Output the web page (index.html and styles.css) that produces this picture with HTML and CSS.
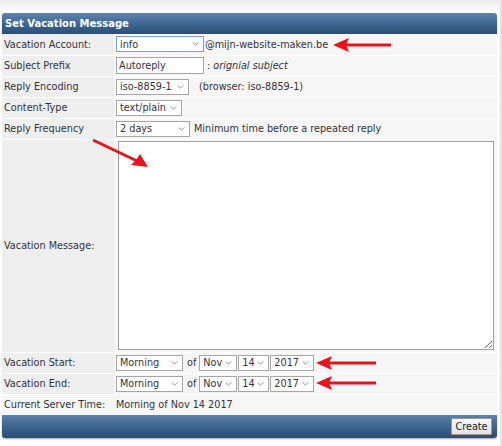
FILE: index.html
```html
<!DOCTYPE html>
<html lang="en">
  <head>
    <meta charset="UTF-8" />
    <title>Set Vacation Message</title>
    <link rel="stylesheet" href="styles.css">
  </head>
  <body>
    <div class="page">
      <div class="top-strip"></div>

      <div class="panel">
        <div class="panel-head">Set Vacation Message</div>

        <table class="form">
          <tr class="row">
            <td class="label">Vacation Account:</td>
            <td class="value">
              <span class="sel sel-focus w-account"><select><option>info</option></select><svg class="chev" viewBox="0 0 8 5"><path d="M0.5 0.5 L4 4 L7.5 0.5" /></svg></span><span class="after-tight">@mijn-website-maken.be</span>
            </td>
          </tr>
          <tr class="row">
            <td class="label">Subject Prefix</td>
            <td class="value">
              <input class="text-input" type="text" value="Autoreply"><span class="hint">: <em>orignial subject</em></span>
            </td>
          </tr>
          <tr class="row">
            <td class="label">Reply Encoding</td>
            <td class="value">
              <span class="sel w-encoding"><select><option>iso-8859-1</option></select><svg class="chev" viewBox="0 0 8 5"><path d="M0.5 0.5 L4 4 L7.5 0.5" /></svg></span><span class="after-wide">(browser: iso-8859-1)</span>
            </td>
          </tr>
          <tr class="row">
            <td class="label">Content-Type</td>
            <td class="value">
              <span class="sel w-type"><select><option>text/plain</option></select><svg class="chev" viewBox="0 0 8 5"><path d="M0.5 0.5 L4 4 L7.5 0.5" /></svg></span>
            </td>
          </tr>
          <tr class="row">
            <td class="label">Reply Frequency</td>
            <td class="value">
              <span class="sel w-freq"><select><option>2 days</option></select><svg class="chev" viewBox="0 0 8 5"><path d="M0.5 0.5 L4 4 L7.5 0.5" /></svg></span><span class="after">Minimum time before a repeated reply</span>
            </td>
          </tr>
          <tr class="row row-message">
            <td class="label">Vacation Message:</td>
            <td class="value">
              <textarea class="message"></textarea>
            </td>
          </tr>
          <tr class="row">
            <td class="label">Vacation Start:</td>
            <td class="value">
              <div class="date-line">
                <span class="sel w-part"><select><option>Morning</option></select><svg class="chev" viewBox="0 0 8 5"><path d="M0.5 0.5 L4 4 L7.5 0.5" /></svg></span>
                <span class="of">of</span>
                <span class="sel w-month"><select><option>Nov</option></select><svg class="chev" viewBox="0 0 8 5"><path d="M0.5 0.5 L4 4 L7.5 0.5" /></svg></span>
                <span class="sel w-day"><select><option>14</option></select><svg class="chev" viewBox="0 0 8 5"><path d="M0.5 0.5 L4 4 L7.5 0.5" /></svg></span>
                <span class="sel w-year"><select><option>2017</option></select><svg class="chev" viewBox="0 0 8 5"><path d="M0.5 0.5 L4 4 L7.5 0.5" /></svg></span>
              </div>
            </td>
          </tr>
          <tr class="row">
            <td class="label">Vacation End:</td>
            <td class="value">
              <div class="date-line">
                <span class="sel w-part"><select><option>Morning</option></select><svg class="chev" viewBox="0 0 8 5"><path d="M0.5 0.5 L4 4 L7.5 0.5" /></svg></span>
                <span class="of">of</span>
                <span class="sel w-month"><select><option>Nov</option></select><svg class="chev" viewBox="0 0 8 5"><path d="M0.5 0.5 L4 4 L7.5 0.5" /></svg></span>
                <span class="sel w-day"><select><option>14</option></select><svg class="chev" viewBox="0 0 8 5"><path d="M0.5 0.5 L4 4 L7.5 0.5" /></svg></span>
                <span class="sel w-year"><select><option>2017</option></select><svg class="chev" viewBox="0 0 8 5"><path d="M0.5 0.5 L4 4 L7.5 0.5" /></svg></span>
              </div>
            </td>
          </tr>
          <tr class="row row-plain">
            <td class="label">Current Server Time:</td>
            <td class="value">Morning of Nov 14 2017</td>
          </tr>
        </table>

        <div class="panel-foot">
          <button class="create-btn">Create</button>
        </div>
      </div>

      <!-- red annotation arrows drawn on top of the form -->
      <svg class="arrows" viewBox="0 0 502 446">
        <g fill="#e8141b" stroke="#e8141b">
          <line x1="391" y1="45" x2="344" y2="45" stroke-width="3" />
          <polygon points="333,45 349,38 346,45 349,52" stroke="none" />

          <line x1="93" y1="140" x2="137" y2="161" stroke-width="3" />
          <polygon points="148,167 131,165 136,160 140,154" stroke="none" />

          <line x1="376" y1="363" x2="327" y2="363" stroke-width="3" />
          <polygon points="316,363 332,356 329,363 332,370" stroke="none" />

          <line x1="376" y1="383" x2="327" y2="383" stroke-width="3" />
          <polygon points="316,383 332,376 329,383 332,390" stroke="none" />
        </g>
      </svg>
    </div>
  </body>
</html>
```

FILE: styles.css
```css
* {
  margin: 0;
  padding: 0;
  box-sizing: border-box;
}

body {
  font-family: "DejaVu Sans", Verdana, sans-serif;
  font-size: 9.7px;
  color: #33333d;
  background-color: #ffffff;
}

.page {
  width: 502px;
  height: 446px;
  position: relative;
  border-right: 2px solid #e4e4e4;
}

.top-strip {
  height: 13px;
  background: linear-gradient(#e9e9e9, #f6f6f6 55%, #ffffff);
}

.panel {
  width: 495px;
  margin-left: 2px;
}

.panel-head {
  height: 21px;
  line-height: 21px;
  padding-left: 3px;
  color: #ffffff;
  font-weight: bold;
  font-size: 10px;
  border-radius: 3px 3px 0 0;
  background: linear-gradient(#6184ad, #426a95 45%, #2c4e74);
  box-shadow: 0 1px 2px rgba(0, 0, 0, 0.3);
}

.form {
  width: 100%;
  border-collapse: collapse;
}

.row td {
  height: 21px;
  border-bottom: 1px solid #ffffff;
  vertical-align: middle;
}

.row-message td {
  height: 213px;
}

.row-plain td {
  height: 20px;
}

.label {
  width: 112px;
  padding-left: 2px;
  background-color: #eeeeee;
  white-space: nowrap;
}

.value {
  padding-left: 2px;
  background-color: #f6f6f6;
  white-space: nowrap;
}

.row-plain .label,
.row-plain .value {
  background-color: #f6f6f6;
}

.sel {
  display: inline-block;
  position: relative;
  flex: none;
  height: 16px;
  vertical-align: middle;
}

.sel select {
  -webkit-appearance: none;
  appearance: none;
  width: 100%;
  height: 16px;
  padding-left: 3px;
  font-family: inherit;
  font-size: 9.7px;
  color: #33333d;
  background-color: #ffffff;
  border: 1px solid #a6a6a6;
  border-radius: 0;
  outline: none;
}

.sel-focus select {
  border-color: #7aa0d6;
}

.chev {
  position: absolute;
  right: 5px;
  top: 6px;
  width: 7px;
  height: 4px;
  fill: none;
  stroke: #8c8c8c;
  stroke-width: 1.2;
}

.w-account { width: 88px; }
.w-encoding { width: 73px; }
.w-type { width: 66px; }
.w-freq { width: 74px; }
.w-part { width: 67px; }
.w-month { width: 38px; }
.w-day { width: 31px; }
.w-year { width: 44px; }

.after-tight {
  margin-left: 1px;
  vertical-align: middle;
}

.after-wide {
  margin-left: 10px;
  vertical-align: middle;
}

.after {
  margin-left: 4px;
  vertical-align: middle;
}

.text-input {
  width: 88px;
  height: 17px;
  padding-left: 2px;
  font-family: inherit;
  font-size: 9.7px;
  color: #33333d;
  border: 1px solid #a6a6a6;
  vertical-align: middle;
}

.hint {
  margin-left: 3px;
  vertical-align: middle;
}

.message {
  display: block;
  width: 376px;
  height: 209px;
  margin-left: 2px;
  border: 1px solid #a0a0a0;
  background-color: #ffffff;
}

.date-line {
  display: flex;
  align-items: center;
  gap: 1px;
}

.of {
  margin: 0 2px 0 3px;
}

.panel-foot {
  height: 23px;
  display: flex;
  justify-content: flex-end;
  align-items: center;
  padding-right: 5px;
  border-radius: 0 0 3px 3px;
  background: linear-gradient(#5d81aa, #3f6791 45%, #2b4c71);
  box-shadow: 0 1px 2px rgba(0, 0, 0, 0.35);
}

.create-btn {
  width: 41px;
  height: 17px;
  font-family: inherit;
  font-size: 9.7px;
  color: #222222;
  background: linear-gradient(#f8f8f8, #e2e2e2);
  border: 1px solid #9a9a9a;
  border-radius: 1px;
}

.arrows {
  position: absolute;
  left: 0;
  top: 0;
  width: 502px;
  height: 446px;
  pointer-events: none;
}
```
